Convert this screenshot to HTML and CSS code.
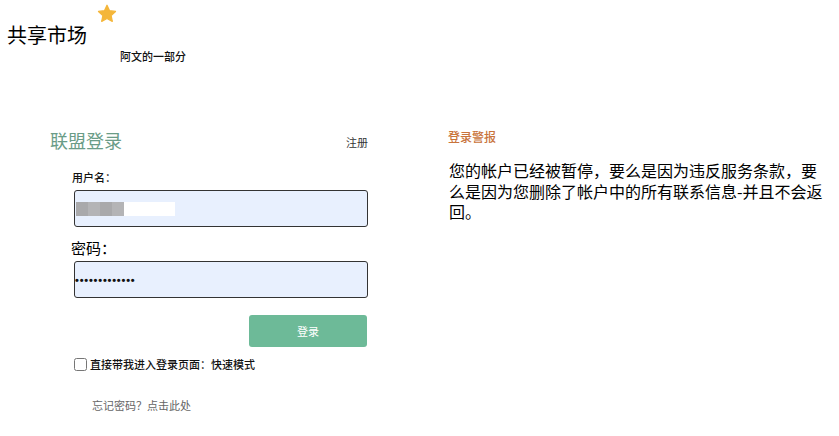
FILE: index.html
```html
<!DOCTYPE html>
<html lang="zh">
<head>
  <meta charset="UTF-8" />
  <title>共享市场</title>
  <link rel="stylesheet" href="styles.css">
</head>
<body>

  <header class="brand">
    <h1 class="brand-name">共享市场</h1>
    <svg class="star" width="20" height="19" viewBox="0 0 24 23">
      <path d="M12 1.5l3.1 6.6 7.2.9-5.3 5 1.4 7.1L12 17.6l-6.4 3.5 1.4-7.1-5.3-5 7.2-.9z" fill="#f4b63a" stroke="#f4b63a" stroke-width="1.5" stroke-linejoin="round"/>
    </svg>
    <span class="brand-sub">阿文的一部分</span>
  </header>

  <main class="content">
    <section class="login">
      <div class="login-head">
        <h2>联盟登录</h2>
        <a href="#" class="register">注册</a>
      </div>

      <form class="login-form">
        <label class="label-small">用户名：</label>
        <div class="field field-user">
          <span class="blur-blocks"><i></i><i></i><i></i><i></i></span><span class="blur-white"></span>
        </div>

        <label class="label-big">密码：</label>
        <div class="field field-pass">
          <span class="dots">•••••••••••••</span>
        </div>

        <div class="actions">
          <button type="button" class="btn-login">登录</button>
        </div>

        <label class="remember"><input type="checkbox"> 直接带我进入登录页面：快速模式</label>

        <a href="#" class="forgot">忘记密码？点击此处</a>
      </form>
    </section>

    <section class="alert">
      <h3>登录警报</h3>
      <p>您的帐户已经被暂停，要么是因为违反服务条款，要么是因为您删除了帐户中的所有联系信息-并且不会返回。</p>
    </section>
  </main>

</body>
</html>
```
FILE: styles.css
```css
body {
  margin: 0;
  font-family: "Noto Sans CJK SC", "Noto Sans", sans-serif;
  background-color: #fff;
  color: #111;
}

.brand {
  position: relative;
  height: 66px;
}

.brand-name {
  margin: 0;
  padding: 22px 0 0 7px;
  font-size: 20px;
  font-weight: normal;
  line-height: 26px;
  color: #000;
}

.star {
  position: absolute;
  left: 97px;
  top: 4px;
}

.brand-sub {
  position: absolute;
  left: 120px;
  top: 48px;
  font-size: 11px;
  font-weight: 500;
  line-height: 16px;
}

.content {
  display: flex;
  padding: 61px 0 0 50px;
}

.login {
  width: 318px;
}

.login-head {
  display: flex;
  justify-content: space-between;
  align-items: center;
}

.login-head h2 {
  margin: -1px 0 1px;
  font-size: 18px;
  font-weight: normal;
  color: #6a9c87;
  line-height: 28px;
}

.register {
  font-size: 11px;
  color: #333;
  text-decoration: none;
  margin-top: 2px;
}

.login-form {
  padding: 14px 0 0 24px;
}

.label-small {
  display: block;
  font-size: 11px;
  font-weight: 500;
  line-height: 16px;
  margin-left: -2px;
}

.label-big {
  display: block;
  font-size: 15px;
  font-weight: normal;
  line-height: 20px;
  margin: 11px 0 0 -3px;
  color: #000;
}

.field {
  display: flex;
  align-items: center;
  height: 35px;
  background-color: #e8f0fe;
  border: 1px solid #333;
  border-radius: 3px;
}

.field-user {
  margin-top: 5px;
}

.field-pass {
  margin-top: 3px;
}

.blur-blocks {
  display: flex;
  margin-left: 1px;
}

.blur-blocks i {
  display: block;
  width: 12px;
  height: 14px;
  background-color: #a9a9ab;
}

.blur-blocks i:nth-child(2),
.blur-blocks i:nth-child(4) {
  background-color: #b4b4b6;
}

.blur-white {
  display: block;
  width: 51px;
  height: 14px;
  background-color: #fff;
}

.dots {
  font-family: "Liberation Sans", Arial, sans-serif;
  font-size: 11px;
  font-weight: bold;
  letter-spacing: 0.8px;
  color: #111;
}

.actions {
  display: flex;
  justify-content: flex-end;
  margin-top: 17px;
  padding-right: 1px;
}

.btn-login {
  width: 118px;
  height: 32px;
  border: none;
  border-radius: 3px;
  background-color: #6dba98;
  color: #fff;
  font-family: inherit;
  font-size: 11px;
}

.remember {
  display: flex;
  align-items: center;
  margin-top: 9px;
  font-size: 11px;
  font-weight: 500;
  line-height: 16px;
}

.remember input {
  width: 13px;
  height: 13px;
  margin: 0 3px 0 0;
}

.forgot {
  display: block;
  margin: 25px 0 0 18px;
  font-size: 11px;
  color: #666;
  text-decoration: none;
}

.alert {
  margin-left: 80px;
  width: 384px;
}

.alert h3 {
  margin: 0;
  padding-top: 2px;
  font-size: 12px;
  font-weight: 500;
  color: #c9743c;
  line-height: 16px;
}

.alert p {
  margin: 15px 0 0 1px;
  font-size: 16px;
  font-weight: normal;
  line-height: 20.5px;
  color: #000;
}
```
